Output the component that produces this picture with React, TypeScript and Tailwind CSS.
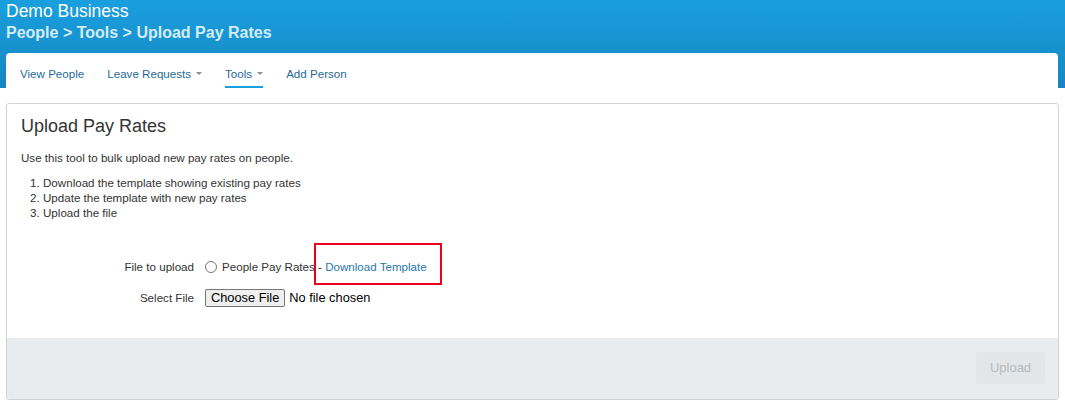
const font = { fontFamily: '"Liberation Sans", Arial, sans-serif' };

const tabs = [
    { label: "View People", caret: false, active: false },
    { label: "Leave Requests", caret: true, active: false },
    { label: "Tools", caret: true, active: true },
    { label: "Add Person", caret: false, active: false },
];

function Caret() {
    return (
        <span className="ml-[5px] inline-block h-0 w-0 border-x-[3px] border-t-[3px] border-x-transparent border-t-[#8a8f94] align-middle" />
    );
}

export default function App() {
    return (
        <div
            className="min-h-[407px] w-[1065px] bg-white text-[11.6px] text-[#333]"
            style={font}
        >
            <div className="h-[88px] bg-gradient-to-b from-[#1a9fde] to-[#1587c2] px-[6px] pt-[1px]">
                <div className="text-[17.5px] leading-[21px] text-white">
                    Demo Business
                </div>
                <div className="mt-[1px] text-[16px] font-bold leading-[20px] text-[#d4edf9]">
                    People &gt; Tools &gt; Upload Pay Rates
                </div>
                <div className="mt-[10px] flex h-[35px] w-[1052px] gap-[23px] rounded-t-[4px] bg-white pl-[14px]">
                    {tabs.map((tab) => (
                        <div
                            key={tab.label}
                            className={
                                tab.active
                                    ? "flex h-[35px] items-center border-b-2 border-[#1a9fde] pt-[8px] text-[#1f6b98]"
                                    : "flex h-[35px] items-center border-b-2 border-transparent pt-[8px] text-[#1f6b98]"
                            }
                        >
                            {tab.label}
                            {tab.caret && <Caret />}
                        </div>
                    ))}
                </div>
            </div>

            <div className="mx-[6px] mt-[15px] w-[1053px] rounded-[3px] border border-[#d3d3d3]">
                <div className="px-[14px] pb-[30px] pt-[11px]">
                    <h2 className="text-[18px] leading-[22px] text-[#333]">
                        Upload Pay Rates
                    </h2>
                    <p className="mt-[13px] leading-[15px]">
                        Use this tool to bulk upload new pay rates on people.
                    </p>
                    <ol className="mt-[10px] list-decimal pl-[22px] leading-[15px]">
                        <li>Download the template showing existing pay rates</li>
                        <li>Update the template with new pay rates</li>
                        <li>Upload the file</li>
                    </ol>

                    <div className="mt-[38px] flex items-center">
                        <div className="w-[173px] text-right">File to upload</div>
                        <label className="ml-[11px] flex items-center">
                            <span className="h-[12px] w-[12px] rounded-full border border-[#767676] bg-white" />
                            <span className="ml-[5px]">People Pay Rates</span>
                        </label>
                        <span>&nbsp;-&nbsp;</span>
                        <span className="relative">
                            <a className="text-[#2a78ac]">Download Template</a>
                            <span className="absolute left-[-11px] top-[-15px] h-[42px] w-[128px] border-2 border-[#e8001c]" />
                        </span>
                    </div>

                    <div className="mt-[13px] flex items-center">
                        <div className="w-[173px] text-right">Select File</div>
                        <div className="ml-[11px] flex items-center text-[12.8px] text-black">
                            <span className="flex h-[18px] items-center rounded-[2px] border border-[#767676] bg-[#efefef] px-[5px]">
                                Choose File
                            </span>
                            <span className="ml-[4px]">No file chosen</span>
                        </div>
                    </div>
                </div>

                <div className="flex h-[61px] items-center justify-end rounded-b-[3px] bg-[#e9ecef] pr-[13px]">
                    <div className="flex h-[32px] w-[69px] items-center justify-center rounded-[3px] bg-[#e3e6e9] text-[13px] text-[#b6babe]">
                        Upload
                    </div>
                </div>
            </div>
        </div>
    );
}
